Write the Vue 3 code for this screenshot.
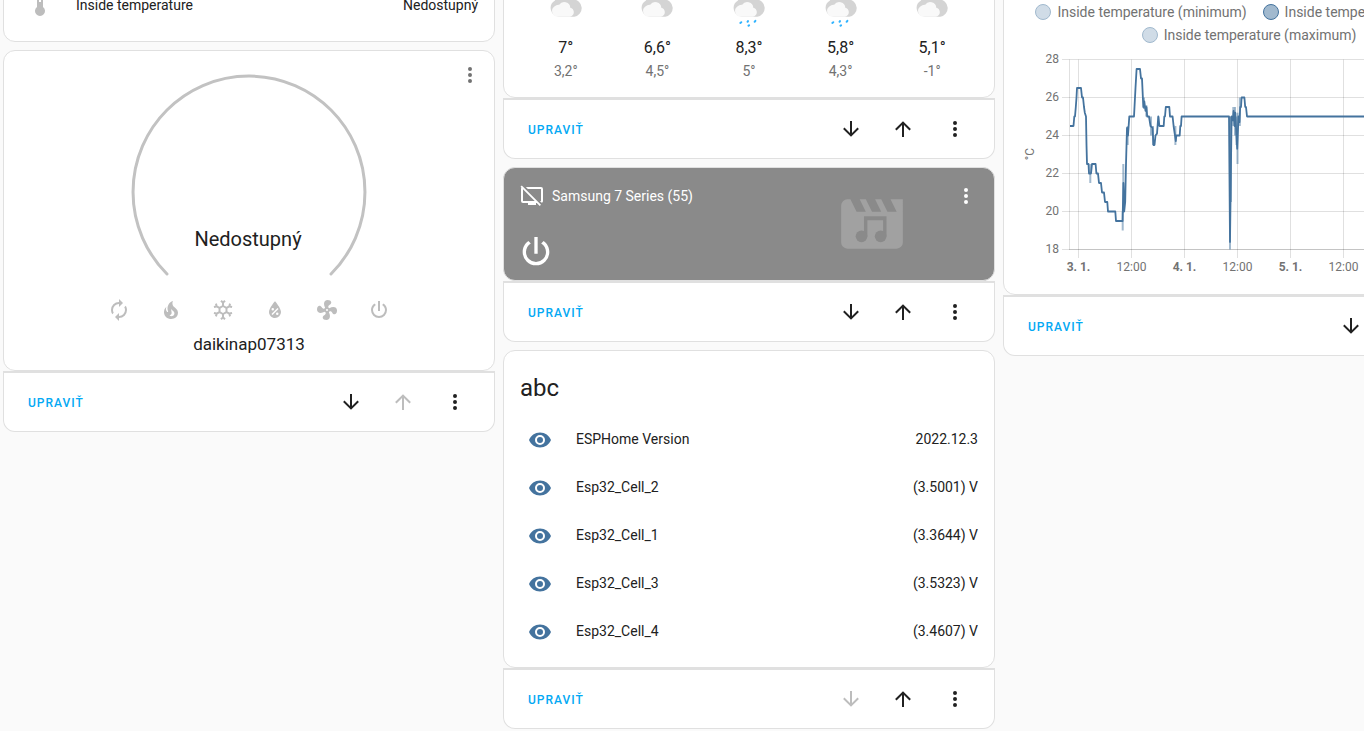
<template>
  <main class="dashboard">
    <div class="column">
      <section class="card">
        <div class="entity">
          <span class="badge unavailable">
            <svg class="icon" viewBox="0 0 24 24"><path :d="icons.thermometer" /></svg>
          </span>
          <span class="name">Inside temperature</span>
          <span class="state">Nedostupný</span>
        </div>
      </section>

      <div class="block">
        <section class="card climate">
          <button class="icon-button more" aria-label="Viac">
            <svg class="icon" viewBox="0 0 24 24"><path :d="icons.dots" /></svg>
          </button>
          <svg class="dial" viewBox="0 0 240 214">
            <path d="M38 202A116 116 0 1 1 202 202" />
            <text x="119" y="174">Nedostupný</text>
          </svg>
          <div class="modes">
            <button v-for="mode in modes" :key="mode" class="icon-button" :aria-label="mode">
              <svg class="icon" viewBox="0 0 24 24"><path :d="icons[mode]" /></svg>
            </button>
          </div>
          <div class="climate-name">daikinap07313</div>
        </section>
        <div class="actions">
          <button class="edit">UPRAVIŤ</button>
          <button class="icon-button" aria-label="Dole">
            <svg class="icon" viewBox="0 0 24 24"><path :d="icons.down" /></svg>
          </button>
          <button class="icon-button" aria-label="Hore" disabled>
            <svg class="icon" viewBox="0 0 24 24"><path :d="icons.up" /></svg>
          </button>
          <button class="icon-button" aria-label="Viac">
            <svg class="icon" viewBox="0 0 24 24"><path :d="icons.dots" /></svg>
          </button>
        </div>
      </div>
    </div>

    <div class="column">
      <div class="block">
        <section class="card forecast">
          <div v-for="(day, i) in forecast" :key="i" class="day">
            <svg class="weather" viewBox="0 0 40 50">
              <path class="cloud-back"
                d="M13 31.7A8.7 8.7 0 0 1 9 15.5A10 10 0 0 1 27 14.4A8.7 8.7 0 0 1 28.3 31.7Z" />
              <path class="cloud-front"
                d="M11 31.7A5.6 5.6 0 0 1 8.4 21.6A6 6 0 0 1 13.2 19.8A6 6 0 0 1 24.3 22.7A4.6 4.6 0 0 1 25.4 31.2L24 31.7Z" />
              <g v-if="day.rain" class="rain">
                <path d="M11.3 38L12.3 37.2" />
                <path d="M18.5 36.8L19 36.1" />
                <path d="M25.6 36.8L26.4 35.8" />
                <path d="M19.5 40.7L20.1 40.3" />
              </g>
            </svg>
            <div class="high">{{ day.high }}</div>
            <div class="low">{{ day.low }}</div>
          </div>
        </section>
        <div class="actions">
          <button class="edit">UPRAVIŤ</button>
          <button class="icon-button" aria-label="Dole">
            <svg class="icon" viewBox="0 0 24 24"><path :d="icons.down" /></svg>
          </button>
          <button class="icon-button" aria-label="Hore">
            <svg class="icon" viewBox="0 0 24 24"><path :d="icons.up" /></svg>
          </button>
          <button class="icon-button" aria-label="Viac">
            <svg class="icon" viewBox="0 0 24 24"><path :d="icons.dots" /></svg>
          </button>
        </div>
      </div>

      <div class="block">
        <section class="card media">
          <svg class="artwork" viewBox="0 0 24 24">
            <path
              d="M18,4L20,8H17L15,4H13L15,8H12L10,4H8L10,8H7L5,4H4A2,2 0 0,0 2,6V18A2,2 0 0,0 4,20H20A2,2 0 0,0 22,18V4H18Z" />
            <path class="note" d="M9.4 9.5H16.7V16H15.6V10.8H10.5V16H9.4Z" />
            <circle class="note" cx="8.6" cy="16" r="1.9" />
            <circle class="note" cx="14.8" cy="16" r="1.9" />
          </svg>
          <div class="media-title">
            <svg class="icon" viewBox="0 0 24 24"><path :d="icons.tvOff" /></svg>
            <span>Samsung 7 Series (55)</span>
          </div>
          <button class="icon-button more" aria-label="Viac">
            <svg class="icon" viewBox="0 0 24 24"><path :d="icons.dots" /></svg>
          </button>
          <button class="power" aria-label="Zapnúť">
            <svg viewBox="0 0 24 24"><path :d="icons.power" /></svg>
          </button>
        </section>
        <div class="actions">
          <button class="edit">UPRAVIŤ</button>
          <button class="icon-button" aria-label="Dole">
            <svg class="icon" viewBox="0 0 24 24"><path :d="icons.down" /></svg>
          </button>
          <button class="icon-button" aria-label="Hore">
            <svg class="icon" viewBox="0 0 24 24"><path :d="icons.up" /></svg>
          </button>
          <button class="icon-button" aria-label="Viac">
            <svg class="icon" viewBox="0 0 24 24"><path :d="icons.dots" /></svg>
          </button>
        </div>
      </div>

      <div class="block">
        <section class="card">
          <h1 class="card-header">abc</h1>
          <div v-for="e in entities" :key="e.name" class="entity">
            <span class="badge">
              <svg class="icon" viewBox="0 0 24 24"><path :d="icons.eye" /></svg>
            </span>
            <span class="name">{{ e.name }}</span>
            <span class="state">{{ e.state }}</span>
          </div>
        </section>
        <div class="actions">
          <button class="edit">UPRAVIŤ</button>
          <button class="icon-button" aria-label="Dole" disabled>
            <svg class="icon" viewBox="0 0 24 24"><path :d="icons.down" /></svg>
          </button>
          <button class="icon-button" aria-label="Hore">
            <svg class="icon" viewBox="0 0 24 24"><path :d="icons.up" /></svg>
          </button>
          <button class="icon-button" aria-label="Viac">
            <svg class="icon" viewBox="0 0 24 24"><path :d="icons.dots" /></svg>
          </button>
        </div>
      </div>
    </div>

    <div class="column">
      <div class="block">
        <section class="card statistics">
          <ul class="legend">
            <li><i class="bullet"></i>Inside temperature (minimum)</li>
            <li><i class="bullet mean"></i>Inside temperature (priemer)</li>
            <li><i class="bullet"></i>Inside temperature (maximum)</li>
          </ul>
          <svg class="chart" viewBox="0 0 490 248">
            <g class="grid">
              <path v-for="t in yTicks" :key="t" :d="`M58 ${y(t)}H474`" />
              <path v-for="tick in xTicks" :key="tick.x" :d="`M${tick.x} 13.5V212`" />
              <path d="M65.5 13.5V203.5" />
              <path d="M65 203.5H474" />
            </g>
            <g class="y-labels">
              <text v-for="t in yTicks" :key="t" x="55" :y="y(t) + 3">{{ t }}</text>
            </g>
            <g class="x-labels">
              <text v-for="tick in xTicks" :key="tick.x" :x="tick.x" y="225" :class="{ major: tick.major }">{{ tick.label }}</text>
            </g>
            <text class="unit" transform="translate(30 108) rotate(-90)">°C</text>
            <path v-for="(r, i) in ranges" :key="i" class="range" :d="`M${r[0]} ${y(r[1])}V${y(r[2])}`" />
            <polyline class="line" :points="line" />
          </svg>
        </section>
        <div class="actions">
          <button class="edit">UPRAVIŤ</button>
          <button class="icon-button" aria-label="Dole">
            <svg class="icon" viewBox="0 0 24 24"><path :d="icons.down" /></svg>
          </button>
          <button class="icon-button" aria-label="Hore">
            <svg class="icon" viewBox="0 0 24 24"><path :d="icons.up" /></svg>
          </button>
          <button class="icon-button" aria-label="Viac">
            <svg class="icon" viewBox="0 0 24 24"><path :d="icons.dots" /></svg>
          </button>
        </div>
      </div>
    </div>
  </main>
</template>

<script setup>
const icons = {
  thermometer: 'M15 13V5A3 3 0 0 0 9 5V13A5 5 0 1 0 15 13M12 4A1 1 0 0 1 13 5V8H11V5A1 1 0 0 1 12 4Z',
  dots: 'M12,16A2,2 0 0,1 14,18A2,2 0 0,1 12,20A2,2 0 0,1 10,18A2,2 0 0,1 12,16M12,10A2,2 0 0,1 14,12A2,2 0 0,1 12,14A2,2 0 0,1 10,12A2,2 0 0,1 12,10M12,4A2,2 0 0,1 14,6A2,2 0 0,1 12,8A2,2 0 0,1 10,6A2,2 0 0,1 12,4Z',
  down: 'M11,4H13V16L18.5,10.5L19.92,11.92L12,19.84L4.08,11.92L5.5,10.5L11,16V4Z',
  up: 'M13,20H11V8L5.5,13.5L4.08,12.08L12,4.16L19.92,12.08L18.5,13.5L13,8V20Z',
  eye: 'M12,9A3,3 0 0,0 9,12A3,3 0 0,0 12,15A3,3 0 0,0 15,12A3,3 0 0,0 12,9M12,17A5,5 0 0,1 7,12A5,5 0 0,1 12,7A5,5 0 0,1 17,12A5,5 0 0,1 12,17M12,4.5C7,4.5 2.73,7.61 1,12C2.73,16.39 7,19.5 12,19.5C17,19.5 21.27,16.39 23,12C21.27,7.61 17,4.5 12,4.5Z',
  tvOff: 'M0.5,2.77L1.78,1.5L21,20.72L19.73,22L16.73,19H16V21H8V19H3A2,2 0 0,1 1,17V5C1,4.5 1.17,4.07 1.46,3.73L0.5,2.77M21,17V5H7.82L5.82,3H21A2,2 0 0,1 23,5V17C23,17.85 22.45,18.59 21.7,18.87L19.82,17H21M3,17H14.73L3,5.27V17Z',
  auto: 'M12,6V9L16,5L12,1V4A8,8 0 0,0 4,12C4,13.57 4.46,15.03 5.24,16.26L6.7,14.8C6.25,13.97 6,13 6,12A6,6 0 0,1 12,6M18.76,7.74L17.3,9.2C17.74,10.04 18,11 18,12A6,6 0 0,1 12,18V15L8,19L12,23V20A8,8 0 0,0 20,12C20,10.43 19.54,8.97 18.76,7.74Z',
  heat: 'M17.66 11.2C17.43 10.9 17.15 10.64 16.89 10.38C16.22 9.78 15.46 9.35 14.82 8.72C13.33 7.26 13 4.85 13.95 3C13 3.23 12.17 3.75 11.46 4.32C8.87 6.4 7.85 10.07 9.07 13.22C9.11 13.32 9.15 13.42 9.15 13.55C9.15 13.77 9 13.97 8.8 14.05C8.57 14.15 8.33 14.09 8.14 13.93C8.08 13.88 8.04 13.83 8 13.76C6.87 12.33 6.69 10.28 7.45 8.64C5.78 10 4.87 12.3 5 14.47C5.06 14.97 5.12 15.47 5.29 15.97C5.43 16.57 5.7 17.17 6 17.7C7.08 19.43 8.95 20.67 10.96 20.92C13.1 21.19 15.39 20.8 17.03 19.32C18.86 17.66 19.5 15 18.56 12.72L18.43 12.46C18.22 12 17.66 11.2 17.66 11.2M14.5 17.5C14.22 17.74 13.76 18 13.4 18.1C12.28 18.5 11.16 17.94 10.5 17.28C11.69 17 12.4 16.12 12.61 15.23C12.78 14.43 12.46 13.77 12.33 13C12.21 12.26 12.23 11.63 12.5 10.94C12.69 11.32 12.89 11.7 13.13 12C13.9 13 15.11 13.44 15.37 14.8C15.41 14.94 15.43 15.08 15.43 15.23C15.46 16.05 15.1 16.95 14.5 17.5H14.5Z',
  cool: 'M20.79,13.95L18.46,14.57L16.46,13.44V10.56L18.46,9.43L20.79,10.05L21.31,8.12L19.54,7.65L20,5.88L18.07,5.36L17.45,7.69L15.45,8.82L13,7.38V5.12L14.71,3.41L13.29,2L12,3.29L10.71,2L9.29,3.41L11,5.12V7.38L8.5,8.82L6.5,7.69L5.92,5.36L4,5.88L4.47,7.65L2.7,8.12L3.22,10.05L5.55,9.43L7.55,10.56V13.45L5.55,14.58L3.22,13.96L2.7,15.89L4.47,16.36L4,18.12L5.93,18.64L6.55,16.31L8.55,15.18L11,16.62V18.88L9.29,20.59L10.71,22L12,20.71L13.29,22L14.7,20.59L13,18.88V16.62L15.5,15.17L17.5,16.3L18.12,18.63L20,18.12L19.53,16.35L21.3,15.88L20.79,13.95M9.5,10.56L12,9.11L14.5,10.56V13.44L12,14.89L9.5,13.44V10.56Z',
  dry: 'M12,3.25C12,3.25 6,10 6,14C6,17.32 8.69,20 12,20A6,6 0 0,0 18,14C18,10 12,3.25 12,3.25M14.47,9.97L15.53,11.03L9.53,17.03L8.47,15.97M9.75,10A1.25,1.25 0 0,1 11,11.25A1.25,1.25 0 0,1 9.75,12.5A1.25,1.25 0 0,1 8.5,11.25A1.25,1.25 0 0,1 9.75,10M14.25,14.5A1.25,1.25 0 0,1 15.5,15.75A1.25,1.25 0 0,1 14.25,17A1.25,1.25 0 0,1 13,15.75A1.25,1.25 0 0,1 14.25,14.5Z',
  fan: 'M12,11A1,1 0 0,0 11,12A1,1 0 0,0 12,13A1,1 0 0,0 13,12A1,1 0 0,0 12,11M12.5,2C17,2 17.11,5.57 14.75,6.75C13.76,7.24 13.32,8.29 13.13,9.22C13.61,9.42 14.03,9.73 14.35,10.13C18.05,8.13 22.03,8.92 22.03,12.5C22.03,17 18.46,17.1 17.28,14.73C16.78,13.74 15.72,13.3 14.79,13.11C14.59,13.59 14.28,14 13.88,14.34C15.87,18.03 15.08,22 11.5,22C7,22 6.91,18.42 9.27,17.24C10.25,16.75 10.69,15.71 10.89,14.79C10.4,14.59 9.97,14.27 9.65,13.87C5.96,15.85 2,15.07 2,11.5C2,7 5.56,6.89 6.74,9.26C7.24,10.25 8.29,10.68 9.22,10.87C9.41,10.39 9.73,9.97 10.14,9.65C8.15,5.96 8.94,2 12.5,2Z',
  power: 'M16.56,5.44L15.11,6.89C16.84,7.94 18,9.83 18,12A6,6 0 0,1 12,18A6,6 0 0,1 6,12C6,9.83 7.16,7.94 8.88,6.88L7.44,5.44C5.36,6.88 4,9.28 4,12A8,8 0 0,0 12,20A8,8 0 0,0 20,12C20,9.28 18.64,6.88 16.56,5.44M13,3H11V13H13'
}

const modes = ['auto', 'heat', 'cool', 'dry', 'fan', 'power']

const forecast = [
  { high: '7°', low: '3,2°' },
  { high: '6,6°', low: '4,5°' },
  { high: '8,3°', low: '5°', rain: true },
  { high: '5,8°', low: '4,3°', rain: true },
  { high: '5,1°', low: '-1°' }
]

const entities = [
  { name: 'ESPHome Version', state: '2022.12.3' },
  { name: 'Esp32_Cell_2', state: '(3.5001) V' },
  { name: 'Esp32_Cell_1', state: '(3.3644) V' },
  { name: 'Esp32_Cell_3', state: '(3.5323) V' },
  { name: 'Esp32_Cell_4', state: '(3.4607) V' }
]

const yTicks = [28, 26, 24, 22, 20, 18]
const xTicks = ['3. 1.', '12:00', '4. 1.', '12:00', '5. 1.', '12:00', '6. 1.', '12:00'].map((label, i) => ({
  label,
  x: 74.5 + i * 53,
  major: i % 2 === 0
}))

// temperature to chart height
function y(t) {
  return 13.5 + (28 - t) * 19
}

// [x, mean temperature]
const mean = [
  [66, 24.5], [69.5, 24.5], [70.3, 25], [71, 25], [71.8, 25.5], [72.5, 26], [73, 26.5], [77, 26.5],
  [78, 26], [79, 26], [80, 25.5], [80.8, 25.2], [82, 25], [82.5, 23.5], [83, 22.5], [84.5, 22.5],
  [85, 22], [87, 22], [88, 22.5], [91.6, 22.5], [92.4, 22], [94, 22], [95, 21.5], [97, 21.5],
  [98, 21], [100, 21], [101, 20.5], [103.3, 20.5], [104, 20], [111.3, 20], [112, 19.5], [118.6, 19.5],
  [119.4, 21.5], [120.2, 20], [121.2, 20.5], [122, 22.5], [123, 24.4], [124, 24], [125.3, 25], [130, 25],
  [131.5, 26.5], [132.6, 27.5], [136, 27.5], [137, 27], [138, 27], [139.3, 25.5], [140.3, 25.8],
  [141.5, 25.3], [142.5, 25.5], [143.2, 25], [145, 25], [146.5, 24.5], [148.5, 24.4], [149.5, 23.5],
  [150.5, 23.5], [151.5, 24], [153, 24.1], [154.3, 25], [155.4, 24.5], [159.7, 24.5], [160.3, 25],
  [161, 25], [161.8, 25.5], [165.3, 25.5], [166, 25], [168.6, 25], [169.6, 24.5], [171, 24],
  [171.8, 23.7], [172.3, 24], [175.7, 24], [176.3, 24.5], [177, 24.5], [177.6, 25], [225, 25],
  [226, 18.4], [227.6, 25], [228.8, 24.8], [229.6, 25.3], [230.6, 24.5], [231.2, 25.2], [233.2, 23.3],
  [234.5, 25], [235.5, 24.7], [236.2, 25.5], [237, 25.5], [237.6, 26], [240.4, 26], [241.2, 25.5],
  [242, 25.5], [243, 25], [474, 25]
]
const line = mean.map(([x, t]) => `${x},${y(t)}`).join(' ')

// [x, minimum, maximum] where they differ from the mean
const ranges = [
  [86.3, 21.5, 22.5], [118.7, 19, 20], [119.3, 20, 22.5], [123.7, 23.5, 24.5], [140, 25.4, 26],
  [142.3, 25, 25.6], [147, 24, 25], [149, 23.5, 24.5], [154.5, 24.5, 25], [171.4, 23.5, 24.5],
  [226, 18, 25], [227, 20.5, 25], [229.3, 24.5, 25.5], [231, 24, 25.5], [232.5, 23.5, 25],
  [233.5, 22.5, 25.2], [235.8, 24.5, 26]
]
</script>

<style>
body {
  background-color: #fafafa;
  overflow: hidden;
}
</style>

<style scoped>
.dashboard {
  display: flex;
  gap: 8px;
  min-height: 100vh;
  overflow: hidden;
  /* scrolled part of the first cards */
  margin-top: -16px;
  padding-left: 3px;
  font-family: Roboto, "Liberation Sans", sans-serif;
  font-size: 14px;
  line-height: 20px;
  color: #212121;
}

.column {
  display: flex;
  flex: 1 0 492px;
  flex-direction: column;
  gap: 8px;
}

.card {
  position: relative;
  box-sizing: border-box;
  padding-bottom: 16px;
  border: 1px solid #e0e0e0;
  border-radius: 12px;
  background-color: white;
}

button {
  padding: 0;
  border: none;
  background: none;
  color: inherit;
  font-family: inherit;
  cursor: pointer;
}

.icon {
  display: block;
  flex: none;
  width: 24px;
  height: 24px;
  fill: currentColor;
}

.icon-button {
  display: flex;
  align-items: center;
  justify-content: center;
  width: 48px;
  height: 48px;
}

.icon-button:disabled {
  color: #bdbdbd;
  cursor: default;
}

.more {
  position: absolute;
  top: 0;
  right: 0;
  color: #727272;
}

/* edit bar under each card */
.actions {
  display: flex;
  align-items: center;
  gap: 4px;
  box-sizing: border-box;
  height: 61px;
  padding: 0 15px 0 16px;
  border: 1px solid #e0e0e0;
  border-top-width: 2px;
  border-radius: 0 0 12px 12px;
  background-color: white;
}

.edit {
  height: 36px;
  margin-right: auto;
  padding: 2px 8px 0;
  color: #03a9f4;
  font-size: 12px;
  font-weight: 500;
  letter-spacing: 1px;
}

/* entities */
.card-header {
  margin: 0;
  padding: 12px 16px 6px;
  font-size: 24px;
  font-weight: 400;
  line-height: 50px;
}

.entity {
  display: flex;
  align-items: center;
  height: 40px;
  padding: 0 16px;
}

.entity + .entity {
  margin-top: 8px;
}

.badge {
  display: flex;
  justify-content: center;
  width: 40px;
  padding-top: 2px;
  color: #44739e;
}

.badge.unavailable {
  color: #bdbdbd;
}

.name {
  flex: 1;
  margin-left: 16px;
}

/* climate */
.climate {
  display: flex;
  flex-direction: column;
  align-items: center;
  padding-top: 21px;
}

.dial {
  width: 240px;
  height: 214px;
}

.dial path {
  fill: none;
  stroke: #c2c2c2;
  stroke-width: 3;
  stroke-linecap: round;
}

.dial text {
  fill: #212121;
  font-size: 20px;
  text-anchor: middle;
}

.modes {
  display: flex;
  gap: 4px;
  color: #bdbdbd;
}

.climate-name {
  font-size: 17px;
}

/* weather */
.forecast {
  display: flex;
  padding: 0 16px 16px;
}

.day {
  display: flex;
  flex: 1;
  flex-direction: column;
  align-items: center;
}

.weather {
  width: 40px;
  height: 50px;
}

.cloud-back {
  fill: #d4d4d4;
}

.cloud-front {
  fill: #f9f9f9;
}

.rain {
  fill: none;
  stroke: #30b3ff;
  stroke-width: 2;
  stroke-linecap: round;
}

.high {
  font-size: 16px;
  line-height: 26px;
}

.low {
  color: #727272;
}

/* media player */
.media {
  display: flex;
  flex-direction: column;
  justify-content: space-between;
  height: 114px;
  padding: 16px 12px 8px;
  background-color: #8a8a8a;
  color: white;
}

.media .more {
  top: 4px;
  right: 4px;
  color: white;
}

.media-title {
  display: flex;
  align-items: center;
  gap: 8px;
  padding-left: 4px;
}

.power {
  width: 40px;
  height: 40px;
}

.power svg {
  display: block;
  fill: currentColor;
}

.artwork {
  position: absolute;
  top: 19px;
  right: 85px;
  width: 74px;
  height: 74px;
  fill: #a1a1a1;
}

.note {
  fill: #8a8a8a;
}

/* statistics graph */
.statistics {
  padding: 15px 0 0;
}

.legend {
  display: flex;
  flex-wrap: wrap;
  justify-content: center;
  margin: 0;
  padding: 0 16px;
  list-style: none;
  color: #727272;
}

.legend li {
  display: flex;
  align-items: center;
  height: 23px;
  padding: 0 8px;
}

.bullet {
  box-sizing: border-box;
  width: 16px;
  height: 16px;
  margin-right: 6px;
  border: 1px solid #a1b9ce;
  border-radius: 50%;
  background-color: #d0dce7;
}

.bullet.mean {
  border-color: #44739e;
  background-color: #a1b9ce;
}

.chart {
  display: block;
  width: 100%;
}

.grid path {
  stroke: rgba(0, 0, 0, 0.12);
}

.chart text {
  fill: #727272;
  font-size: 12px;
}

.y-labels text {
  text-anchor: end;
}

.x-labels text,
.chart .unit {
  text-anchor: middle;
}

.x-labels .major {
  font-weight: bold;
}

.line {
  fill: none;
  stroke: #44739e;
  stroke-width: 1.8;
  stroke-linejoin: round;
}

.range {
  stroke: rgba(68, 115, 158, 0.5);
  stroke-width: 2;
}
</style>
